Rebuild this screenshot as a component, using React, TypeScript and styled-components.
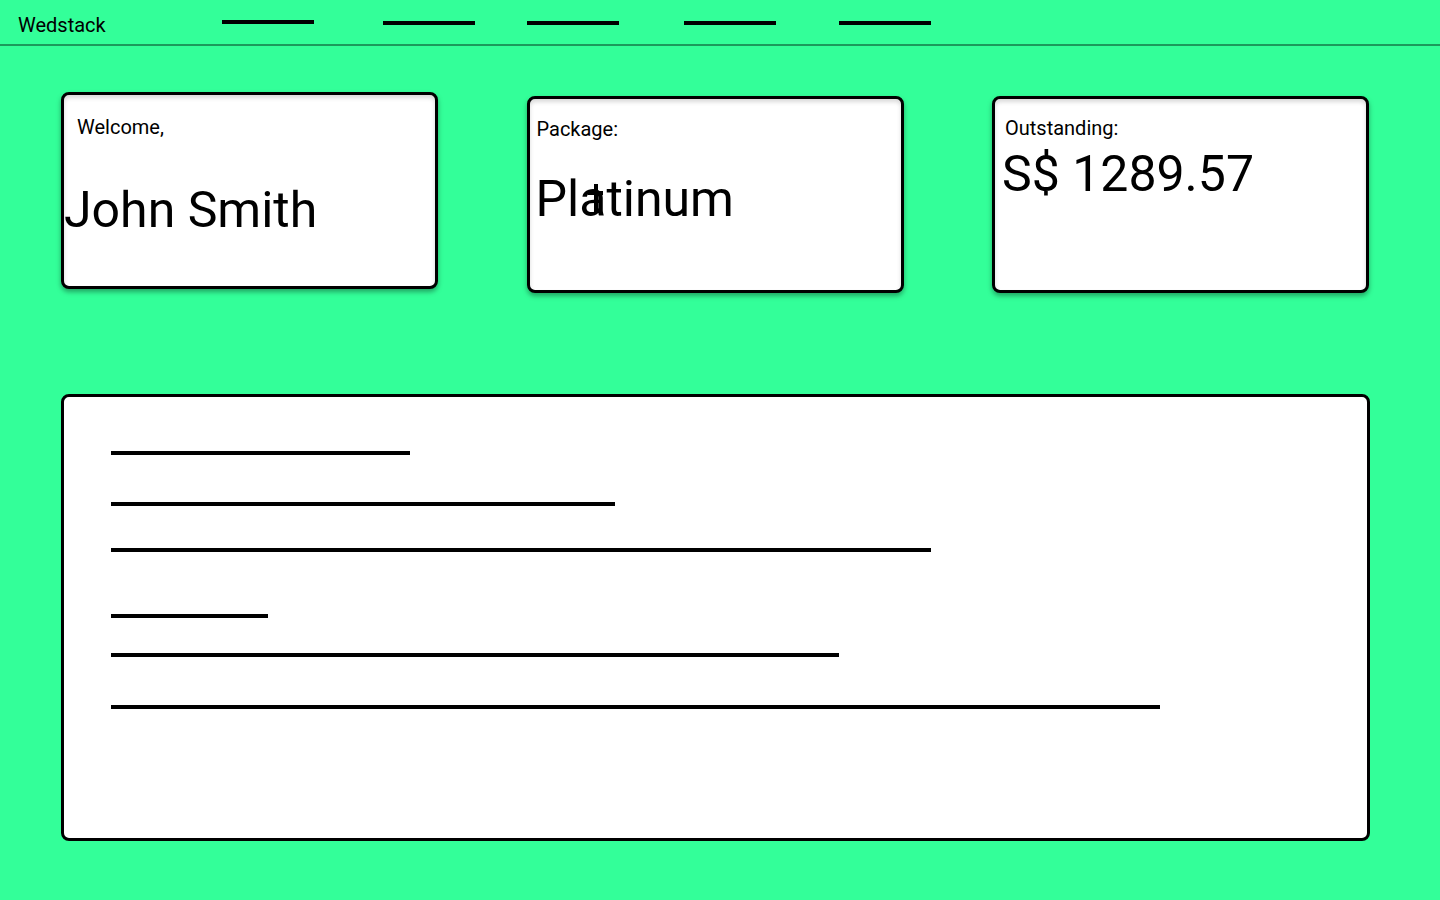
import React from "react";
import styled, { createGlobalStyle } from "styled-components";

const GlobalStyle = createGlobalStyle`
  html, body {
    margin: 0;
    padding: 0;
    background: #33ff99;
    font-family: Roboto, "Liberation Sans", Arial, sans-serif;
    color: #000;
  }
  * { box-sizing: border-box; }
`;

const Header = styled.header`
  display: flex;
  align-items: flex-start;
  height: 46px;
  padding-left: 18px;
  border-bottom: 2px solid #1c9a5c;
`;

const Brand = styled.div`
  width: 204px;
  margin-top: 13px;
  font-size: 20px;
  line-height: 24px;
`;

const Nav = styled.nav`
  display: flex;
  align-items: flex-start;
`;

const NavLink = styled.span<{ $gap: number; $top: number }>`
  display: block;
  width: 92px;
  height: 4px;
  background: #000;
  margin-left: ${(p) => p.$gap}px;
  margin-top: ${(p) => p.$top}px;
`;

const Main = styled.main`
  padding: 46px 70px 0 61px;
`;

const CardRow = styled.div`
  display: flex;
  justify-content: space-between;
  align-items: flex-start;
  width: 1308px;
`;

const Card = styled.section<{ $offset: number }>`
  display: flex;
  flex-direction: column;
  width: 377px;
  height: 197px;
  margin-top: ${(p) => p.$offset}px;
  background: #fff;
  border: 3px solid #000;
  border-radius: 8px;
  box-shadow: 0 3px 5px rgba(0, 0, 0, 0.35), inset 0 3px 4px rgba(0, 0, 0, 0.15);
`;

const Label = styled.div<{ $top: number; $indent: number }>`
  margin-top: ${(p) => p.$top}px;
  padding-left: ${(p) => p.$indent}px;
  font-size: 20px;
  line-height: 24px;
`;

const Value = styled.div<{ $top: number; $indent: number }>`
  margin-top: ${(p) => p.$top}px;
  padding-left: ${(p) => p.$indent}px;
  font-size: 50px;
  line-height: 61px;
  white-space: nowrap;
`;

/* the stray "t"-like stroke that sits over the "a" in the reference */
const Smudged = styled.span`
  position: relative;

  &::before {
    content: "";
    position: absolute;
    left: 15px;
    top: 14px;
    width: 4px;
    height: 30px;
    background: #000;
    border-bottom-right-radius: 6px;
  }

  &::after {
    content: "";
    position: absolute;
    left: 9px;
    top: 21px;
    width: 15px;
    height: 4px;
    background: #000;
  }
`;

const Panel = styled.section`
  width: 1309px;
  height: 447px;
  margin-top: 101px;
  padding-left: 47px;
  background: #fff;
  border: 3px solid #000;
  border-radius: 8px;
`;

const Rule = styled.div<{ $w: number; $top: number }>`
  width: ${(p) => p.$w}px;
  height: 4px;
  margin-top: ${(p) => p.$top}px;
  background: #000;
`;

const navItems = [
  { gap: 0, top: 20 },
  { gap: 69, top: 21 },
  { gap: 52, top: 21 },
  { gap: 65, top: 21 },
  { gap: 63, top: 21 },
];

const rules = [
  { w: 299, top: 54 },
  { w: 504, top: 47 },
  { w: 820, top: 41.5 },
  { w: 157, top: 62.5 },
  { w: 728, top: 35 },
  { w: 1049, top: 48 },
];

export default function App() {
  return (
    <>
      <GlobalStyle />
      <Header>
        <Brand>Wedstack</Brand>
        <Nav>
          {navItems.map((n, i) => (
            <NavLink key={i} $gap={n.gap} $top={n.top} />
          ))}
        </Nav>
      </Header>
      <Main>
        <CardRow>
          <Card $offset={0}>
            <Label $top={20} $indent={13}>Welcome,</Label>
            <Value $top={41} $indent={0}>John Smith</Value>
          </Card>
          <Card $offset={4}>
            <Label $top={18} $indent={7}>Package:</Label>
            <Value $top={28} $indent={6}>
              Pl<Smudged>a</Smudged>tinum
            </Value>
          </Card>
          <Card $offset={4}>
            <Label $top={17} $indent={10}>Outstanding:</Label>
            <Value $top={4} $indent={7}>S$ 1289.57</Value>
          </Card>
        </CardRow>
        <Panel>
          {rules.map((r, i) => (
            <Rule key={i} $w={r.w} $top={r.top} />
          ))}
        </Panel>
      </Main>
    </>
  );
}
